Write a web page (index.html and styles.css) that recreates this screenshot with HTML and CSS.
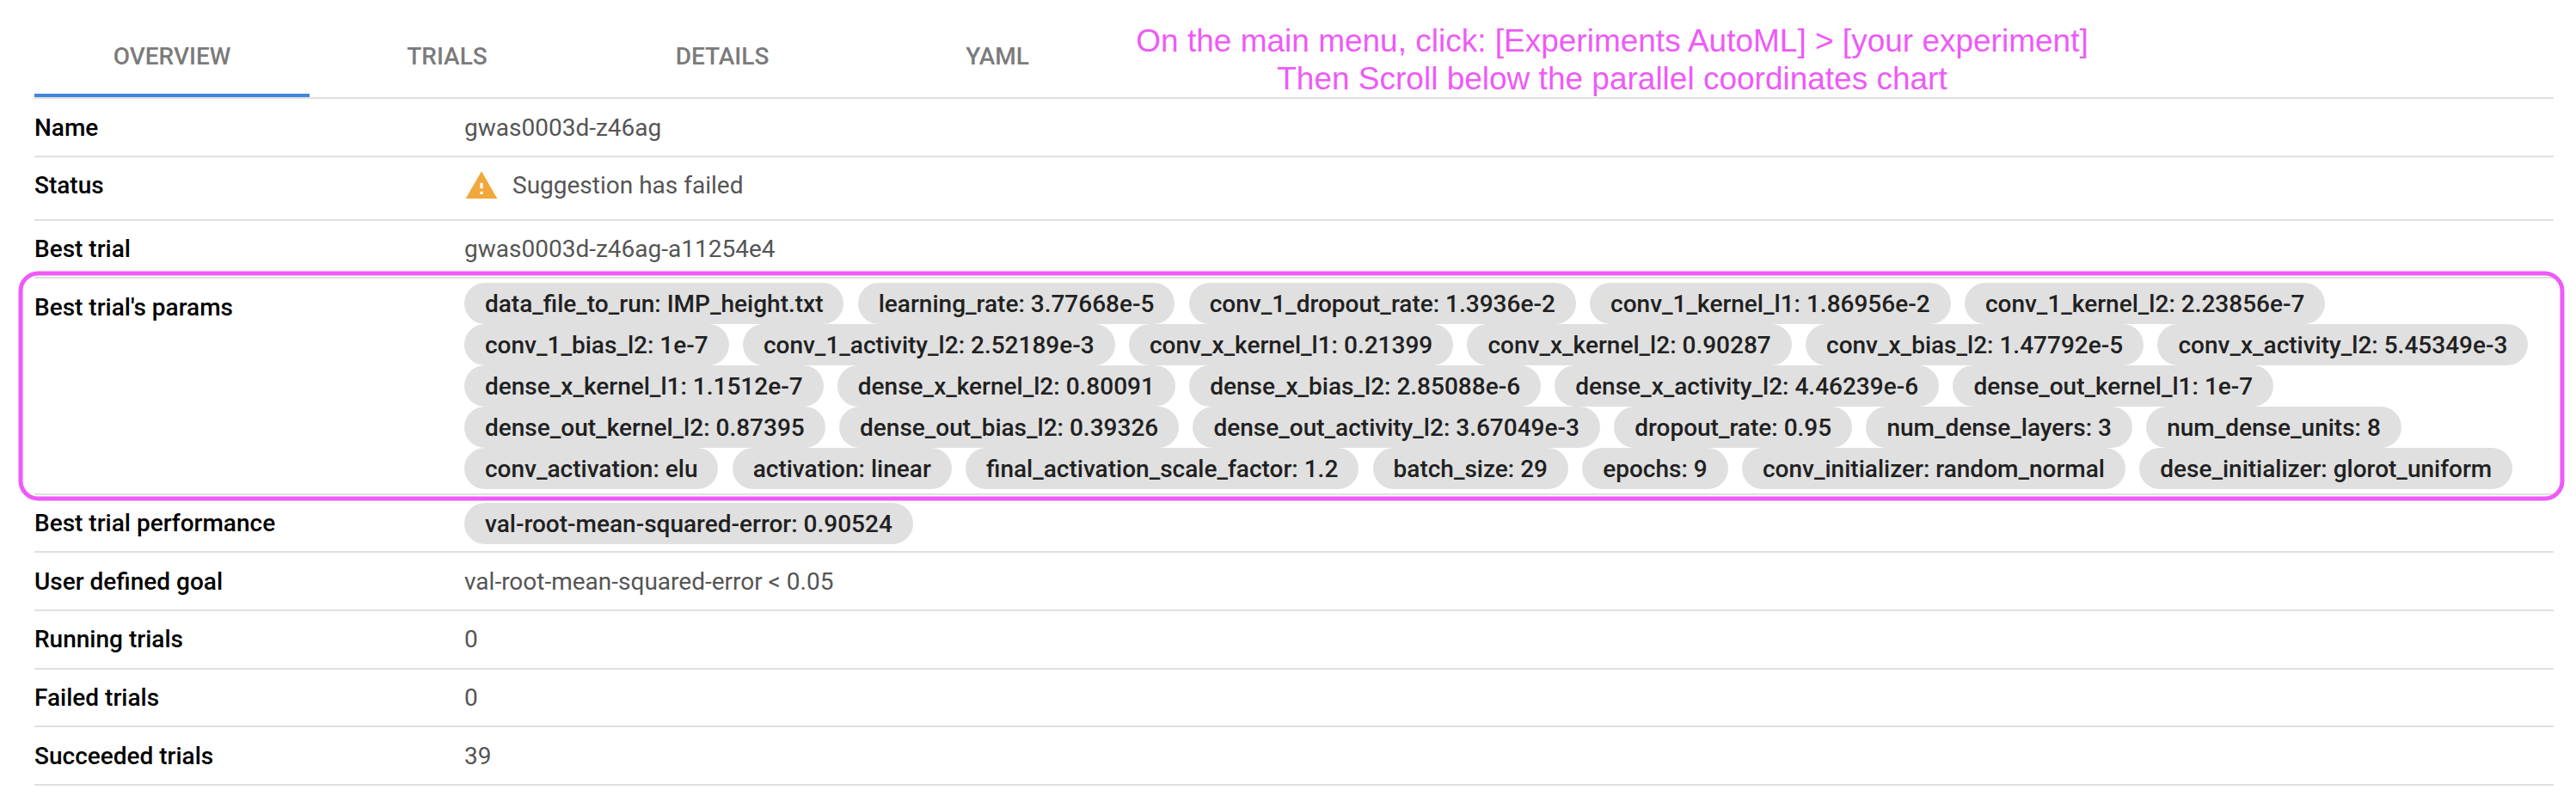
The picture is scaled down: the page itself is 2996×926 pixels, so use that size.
FILE: index.html
```html
<!DOCTYPE html>
<html lang="en">
<head>
<meta charset="utf-8">
<title>Experiment overview</title>
<link rel="stylesheet" href="styles.css">
</head>
<body>
<main class="page">
  <nav class="tabs">
    <a class="tab tab-active">OVERVIEW</a>
    <a class="tab">TRIALS</a>
    <a class="tab">DETAILS</a>
    <a class="tab">YAML</a>
  </nav>
  <p class="note">On the main menu, click: [Experiments AutoML] &gt; [your experiment]<br>Then Scroll below the parallel coordinates chart</p>
  <dl class="details">
    <div class="row"><dt>Name</dt><dd>gwas0003d-z46ag</dd></div>
    <div class="row row-status"><dt>Status</dt><dd class="status"><svg class="warn" viewBox="0 0 24 24"><path d="M1 21h22L12 2 1 21zm12-3h-2v-2h2v2zm0-4h-2v-4h2v4z"/></svg><span>Suggestion has failed</span></dd></div>
    <div class="row row-short"><dt>Best trial</dt><dd>gwas0003d-z46ag-a11254e4</dd></div>
    <div class="row row-params"><dt>Best trial's params</dt>
      <dd class="chips">
        <span class="chip">data_file_to_run: IMP_height.txt</span>
        <span class="chip">learning_rate: 3.77668e-5</span>
        <span class="chip">conv_1_dropout_rate: 1.3936e-2</span>
        <span class="chip">conv_1_kernel_l1: 1.86956e-2</span>
        <span class="chip">conv_1_kernel_l2: 2.23856e-7</span>
        <span class="chip">conv_1_bias_l2: 1e-7</span>
        <span class="chip">conv_1_activity_l2: 2.52189e-3</span>
        <span class="chip">conv_x_kernel_l1: 0.21399</span>
        <span class="chip">conv_x_kernel_l2: 0.90287</span>
        <span class="chip">conv_x_bias_l2: 1.47792e-5</span>
        <span class="chip">conv_x_activity_l2: 5.45349e-3</span>
        <span class="chip">dense_x_kernel_l1: 1.1512e-7</span>
        <span class="chip">dense_x_kernel_l2: 0.80091</span>
        <span class="chip">dense_x_bias_l2: 2.85088e-6</span>
        <span class="chip">dense_x_activity_l2: 4.46239e-6</span>
        <span class="chip">dense_out_kernel_l1: 1e-7</span>
        <span class="chip">dense_out_kernel_l2: 0.87395</span>
        <span class="chip">dense_out_bias_l2: 0.39326</span>
        <span class="chip">dense_out_activity_l2: 3.67049e-3</span>
        <span class="chip">dropout_rate: 0.95</span>
        <span class="chip">num_dense_layers: 3</span>
        <span class="chip">num_dense_units: 8</span>
        <span class="chip">conv_activation: elu</span>
        <span class="chip">activation: linear</span>
        <span class="chip">final_activation_scale_factor: 1.2</span>
        <span class="chip">batch_size: 29</span>
        <span class="chip">epochs: 9</span>
        <span class="chip">conv_initializer: random_normal</span>
        <span class="chip">dese_initializer: glorot_uniform</span>
      </dd>
    </div>
    <div class="row row-short row-perf"><dt>Best trial performance</dt><dd class="chips"><span class="chip">val-root-mean-squared-error: 0.90524</span></dd></div>
    <div class="row"><dt>User defined goal</dt><dd>val-root-mean-squared-error &lt; 0.05</dd></div>
    <div class="row row-running"><dt>Running trials</dt><dd>0</dd></div>
    <div class="row row-short"><dt>Failed trials</dt><dd>0</dd></div>
    <div class="row"><dt>Succeeded trials</dt><dd>39</dd></div>
  </dl>
</main>
</body>
</html>
```
FILE: styles.css
```css
*, *::after { box-sizing: border-box; }
body {
  margin: 0;
  background: #fff;
  font-family: Roboto, sans-serif;
  font-size: 28px;
  line-height: 40px;
  color: #555;
}
.page {
  position: relative;
  padding: 17px 26px 0 40px;
}
.tabs {
  display: flex;
  height: 98px;
  border-bottom: 2px solid #e0e0e0;
}
.tab {
  width: 320px;
  height: 96px;
  line-height: 98px;
  text-align: center;
  font-weight: 500;
  color: #7b7b7b;
}
.tab-active { border-bottom: 4px solid #4285dc; }
.note {
  position: absolute;
  top: 26px;
  left: 1315px;
  width: 1120px;
  margin: 0;
  font-family: "Liberation Sans", Arial, sans-serif;
  font-size: 37px;
  line-height: 44px;
  text-align: center;
  white-space: nowrap;
  color: #ee5af8;
}
.details { margin: 0; }
.row {
  position: relative;
  display: flex;
  height: 68px;
  padding-top: 14px;
  border-bottom: 2px solid #e0e0e0;
}
.row-short { height: 67px; padding-top: 13px; }
.row-status { height: 74px; padding-top: 13px; }
.row-running { padding-top: 13px; }
.row-params { height: 252px; }
.row dt {
  width: 500px;
  flex: none;
  font-weight: 500;
  color: #000;
}
.row dd { margin: 0; }
.status { display: flex; gap: 16px; }
.warn { width: 40px; height: 40px; fill: #f2a73b; }
.row .chips {
  display: flex;
  flex-wrap: wrap;
  align-content: flex-start;
  column-gap: 16.25px;
  margin-top: -9px;
}
.row-perf .chips { margin-top: -4px; }
.chip {
  height: 48px;
  padding: 0 24px;
  border-radius: 24px;
  background: #e0e0e0;
  line-height: 49px;
  font-weight: 500;
  color: #212121;
  white-space: nowrap;
}
.row-params::after {
  content: "";
  position: absolute;
  top: -9px;
  left: -19px;
  right: -12px;
  height: 267px;
  border: 5px solid #ee5af8;
  border-radius: 23px;
  transform: translate(0.5px, 0.5px);
}
```
